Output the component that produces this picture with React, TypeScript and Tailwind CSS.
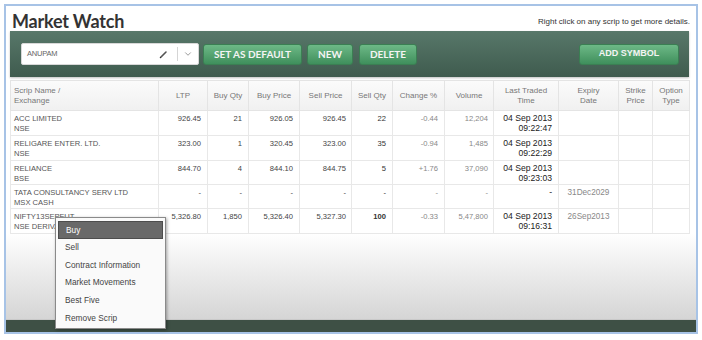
import { ChevronDown } from 'lucide-react'

const COLS = [148, 49, 41, 51, 52, 41, 52, 49, 65, 60, 34, 37]

type Row = {
  name: string
  exch: string
  ltp: string
  buyQty: string
  buyPrice: string
  sellPrice: string
  sellQty: string
  change: string
  volume: string
  date?: string
  time?: string
  expiry?: string
  h: number
}

const ROWS: Row[] = [
  { name: 'ACC LIMITED', exch: 'NSE', ltp: '926.45', buyQty: '21', buyPrice: '926.05', sellPrice: '926.45', sellQty: '22', change: '-0.44', volume: '12,204', date: '04 Sep 2013', time: '09:22:47', h: 25 },
  { name: 'RELIGARE ENTER. LTD.', exch: 'NSE', ltp: '323.00', buyQty: '1', buyPrice: '320.45', sellPrice: '323.00', sellQty: '35', change: '-0.94', volume: '1,485', date: '04 Sep 2013', time: '09:22:29', h: 25 },
  { name: 'RELIANCE', exch: 'BSE', ltp: '844.70', buyQty: '4', buyPrice: '844.10', sellPrice: '844.75', sellQty: '5', change: '+1.76', volume: '37,090', date: '04 Sep 2013', time: '09:23:03', h: 24 },
  { name: 'TATA CONSULTANCY SERV LTD', exch: 'MSX CASH', ltp: '-', buyQty: '-', buyPrice: '-', sellPrice: '-', sellQty: '-', change: '-', volume: '-', time: '-', expiry: '31Dec2029', h: 24 },
  { name: 'NIFTY13SEPFUT', exch: 'NSE DERIVATIVES', ltp: '5,326.80', buyQty: '1,850', buyPrice: '5,326.40', sellPrice: '5,327.30', sellQty: '100', change: '-0.33', volume: '5,47,800', date: '04 Sep 2013', time: '09:16:31', expiry: '26Sep2013', h: 25 },
]

const MENU = ['Buy', 'Sell', 'Contract Information', 'Market Movements', 'Best Five', 'Remove Scrip']

const arial = { fontFamily: '"Liberation Sans", Arial, sans-serif' }
const lato = { fontFamily: 'Lato, "Open Sans", sans-serif' }

export default function App() {
  return (
    <div className="relative w-[702px] h-[340px] bg-white pt-[4px] pl-[4px]" style={arial}>
      <div className="w-[694px] h-[330px] border-2 border-[#a7c3e6] flex flex-col bg-white">
        <div className="ml-[4px] w-[679px]">
          {/* Title row */}
          <div className="h-[25px] flex items-end justify-between">
            <h1 className="text-[18px] leading-[20px] font-bold text-[#333] ml-[2px] tracking-[-0.2px]" style={lato}>
              Market Watch
            </h1>
            <p className="text-[8px] leading-[10px] text-[#333] mb-[4px] -mr-[1px]">
              Right click on any scrip to get more details.
            </p>
          </div>

          {/* Toolbar */}
          <div className="h-[46px] flex items-center pl-[11px] pr-[10px] bg-gradient-to-b from-[#58786a] to-[#3f5b4e] shadow-[0_1px_2px_rgba(0,0,0,0.25)]">
            <div className="w-[178px] h-[22px] bg-white rounded-[2px] border border-[#d8d8d8] flex items-center">
              <span className="flex-1 pl-[5px] text-[7.5px] text-[#666] tracking-[-0.2px]">ANUPAM</span>
              <svg width="9" height="9" viewBox="0 0 9 9" className="mr-[9px]">
                <path d="M1.5 7.5 L7 2" stroke="#555" strokeWidth="1.6" strokeLinecap="round" />
                <path d="M1 8 L2 7" stroke="#333" strokeWidth="1" />
              </svg>
              <div className="w-px h-[14px] bg-[#d5d5d5]" />
              <ChevronDown size={10} className="text-[#888] mx-[5px]" strokeWidth={2} />
            </div>
            <GreenButton label="SET AS DEFAULT" w="w-[99px]" className="ml-[4px]" />
            <GreenButton label="NEW" w="w-[46px]" className="ml-[5px]" />
            <GreenButton label="DELETE" w="w-[58px]" className="ml-[6px]" />
            <div className="flex-1" />
            <button
              className="w-[100px] h-[21px] rounded-[3px] bg-gradient-to-b from-[#6db987] to-[#3f8f5c] border border-[#3b7f53] text-[#f4f4f4] text-[9px] font-bold"
              style={arial}
            >
              ADD SYMBOL
            </button>
          </div>

          {/* Table */}
          <table className="mt-[3px] w-[679px] table-fixed border-collapse">
            <colgroup>
              {COLS.map((w, i) => (
                <col key={i} style={{ width: w }} />
              ))}
            </colgroup>
            <thead>
              <tr className="h-[30px] bg-gradient-to-b from-[#fbfbfb] to-[#f0f0f0] text-[8px] leading-[10px] text-[#777] font-normal">
                <th className="border border-[#e4e4e4] text-left font-normal pl-[3px]">Scrip Name /<br />Exchange</th>
                <th className="border border-[#e4e4e4] font-normal">LTP</th>
                <th className="border border-[#e4e4e4] font-normal">Buy Qty</th>
                <th className="border border-[#e4e4e4] font-normal">Buy Price</th>
                <th className="border border-[#e4e4e4] font-normal">Sell Price</th>
                <th className="border border-[#e4e4e4] font-normal">Sell Qty</th>
                <th className="border border-[#e4e4e4] font-normal">Change %</th>
                <th className="border border-[#e4e4e4] font-normal">Volume</th>
                <th className="border border-[#e4e4e4] font-normal">Last Traded<br />Time</th>
                <th className="border border-[#e4e4e4] font-normal">Expiry<br />Date</th>
                <th className="border border-[#e4e4e4] font-normal">Strike<br />Price</th>
                <th className="border border-[#e4e4e4] font-normal">Option<br />Type</th>
              </tr>
            </thead>
            <tbody>
              {ROWS.map((r, i) => (
                <tr key={i} className="align-top text-[7.6px] leading-[9.5px]" style={{ height: r.h }}>
                  <td className="border border-[#e8e8e8] pl-[3px] pt-[3px] text-[#555]">
                    {r.name}
                    <br />
                    {r.exch}
                  </td>
                  <td className="border border-[#e8e8e8] pr-[6px] pt-[3px] text-right text-[#444]">{r.ltp}</td>
                  <td className="border border-[#e8e8e8] pr-[6px] pt-[3px] text-right text-[#444]">{r.buyQty}</td>
                  <td className="border border-[#e8e8e8] pr-[6px] pt-[3px] text-right text-[#444]">{r.buyPrice}</td>
                  <td className="border border-[#e8e8e8] pr-[5px] pt-[3px] text-right text-[#444]">{r.sellPrice}</td>
                  <td className={`border border-[#e8e8e8] pr-[6px] pt-[3px] text-right text-[#333] ${i === 4 ? 'font-bold' : ''}`}>{r.sellQty}</td>
                  <td className="border border-[#e8e8e8] pr-[6px] pt-[3px] text-right text-[#888]">{r.change}</td>
                  <td className="border border-[#e8e8e8] pr-[5px] pt-[3px] text-right text-[#888]">{r.volume}</td>
                  <td className="border border-[#e8e8e8] pr-[6px] pt-[3px] text-right text-[8.6px] leading-[9.5px] text-[#222]">
                    {r.date && (
                      <>
                        {r.date}
                        <br />
                      </>
                    )}
                    {r.time}
                  </td>
                  <td className="border border-[#e8e8e8] pt-[3px] text-center text-[8.2px] text-[#888]">{r.expiry}</td>
                  <td className="border border-[#e8e8e8]" />
                  <td className="border border-[#e8e8e8]" />
                </tr>
              ))}
            </tbody>
          </table>
        </div>

        {/* Empty area */}
        <div className="flex-1 bg-gradient-to-b from-white to-[#d5d5d5] border-b border-[#c9c9c9]" />
        <div className="h-[12px] bg-[#3e5045]" />
      </div>

      {/* Context menu */}
      <div className="absolute left-[55px] top-[217px] w-[111px] h-[112px] bg-[#fafafa] border border-[#8a8a8a] shadow-[1px_1px_3px_rgba(0,0,0,0.35)] pt-[3px] px-[2px] text-[8.3px] text-[#444]">
        {MENU.map((m, i) => (
          <div
            key={m}
            className={`h-[17.6px] flex items-center pl-[7px] ${
              i === 0 ? 'bg-[#696969] border border-[#4d4d4d] text-white' : ''
            }`}
          >
            {m}
          </div>
        ))}
      </div>
    </div>
  )
}

function GreenButton({ label, w, className }: { label: string; w: string; className?: string }) {
  return (
    <button
      className={`${w} h-[21px] rounded-[3px] bg-gradient-to-b from-[#6db987] to-[#3f8f5c] border border-[#3b7f53] text-[#f4f4f4] text-[10px] font-bold ${className ?? ''}`}
      style={lato}
    >
      {label}
    </button>
  )
}
